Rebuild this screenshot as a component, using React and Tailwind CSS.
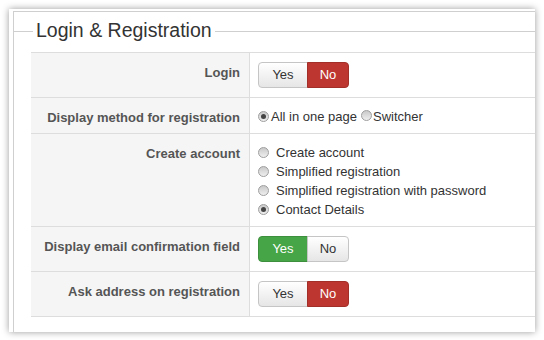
import React from 'react';

const Radio = ({ checked }) => (
  <span className="inline-flex items-center justify-center w-[11px] h-[11px] rounded-full border border-[#9e9e9e] bg-gradient-to-b from-[#c9c9c9] to-[#efefef] shrink-0">
    {checked && <span className="w-[5px] h-[5px] rounded-full bg-[#444]" />}
  </span>
);

const Toggle = ({ value }) => {
  const off = 'bg-gradient-to-b from-white to-[#e6e6e6] text-[#333] border border-[#c5c5c5]';
  const yesCls = value === 'yes' ? 'bg-[#46a546] text-white border border-[#3d8f3d]' : off;
  const noCls = value === 'no' ? 'bg-[#bd362f] text-white border border-[#a32f29]' : off;
  return (
    <div className="flex h-[26px] text-[13px]">
      <span className={`w-[50px] flex items-center justify-center rounded-l-[4px] ${yesCls}`}>Yes</span>
      <span className={`w-[42px] flex items-center justify-center rounded-r-[4px] -ml-px ${noCls}`}>No</span>
    </div>
  );
};

const Row = ({ label, h, children, last }) => (
  <div className={`flex border-t border-[#dddddd] ${last ? 'border-b' : ''}`} style={{ height: h }}>
    <div className="w-[219px] shrink-0 bg-[#f5f5f5] border-r border-[#dddddd] text-right pr-[9px] pt-[10px] font-bold text-[13px] text-[#555]">
      {label}
    </div>
    <div className="flex-1 pl-[8px] pt-[9px]">{children}</div>
  </div>
);

export default function App() {
  return (
    <div className="w-[544px] h-[340px] bg-white pt-[9px] pl-[9px] overflow-hidden" style={{ fontFamily: '"Liberation Sans", Arial, sans-serif' }}>
      <div className="w-[526px] h-[323px] bg-white shadow-[0_0_7px_rgba(0,0,0,0.4)] pt-[2px] pl-[4px] overflow-hidden">
        <div className="h-full border-t border-l border-[#cfcfcf]">
          {/* legend */}
          <div className="flex items-center h-[20px] mt-[9px]">
            <div className="w-[19px] h-px bg-[#cfcfcf]" />
            <span className="px-[3px] text-[19.5px] text-[#333] leading-none">Login &amp; Registration</span>
            <div className="flex-1 h-px bg-[#cfcfcf]" />
          </div>

          <div className="ml-[17px] mt-[11px]">
            <Row label="Login" h={45}>
              <Toggle value="no" />
            </Row>
            <Row label="Display method for registration" h={36}>
              <div className="flex items-center text-[13px] text-[#333]">
                <Radio checked />
                <span className="ml-[2px]">All in one page</span>
                <span className="ml-[4px]"><Radio /></span>
                <span className="ml-[1px]">Switcher</span>
              </div>
            </Row>
            <Row label="Create account" h={93}>
              <div className="flex flex-col text-[13px] text-[#333]">
                {['Create account', 'Simplified registration', 'Simplified registration with password', 'Contact Details'].map((t, i) => (
                  <div key={t} className="flex items-center h-[19px]">
                    <Radio checked={i === 3} />
                    <span className="ml-[7px]">{t}</span>
                  </div>
                ))}
              </div>
            </Row>
            <Row label="Display email confirmation field" h={45}>
              <Toggle value="yes" />
            </Row>
            <Row label="Ask address on registration" h={46} last>
              <Toggle value="no" />
            </Row>
          </div>
        </div>
      </div>
    </div>
  );
}
